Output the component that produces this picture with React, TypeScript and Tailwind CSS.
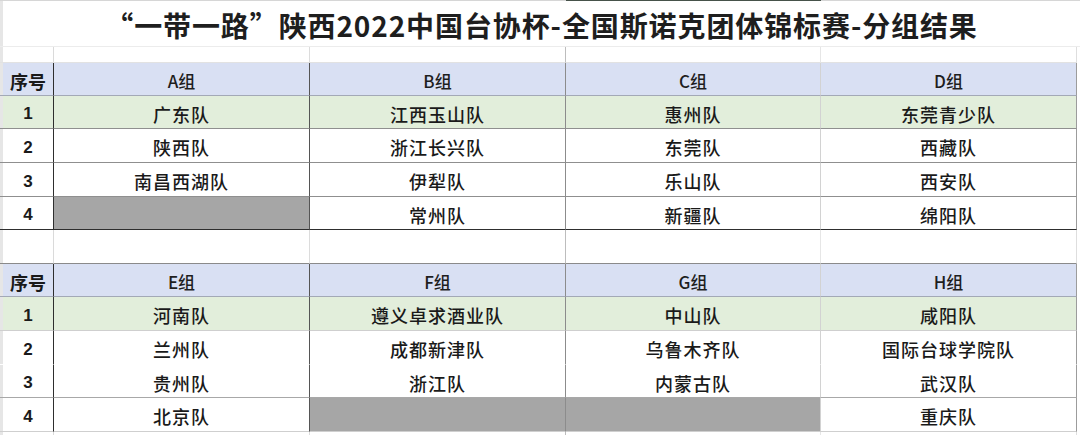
import React from "react";

const VT = [
  "border-r border-r-[#2e2e2e]",
  "border-r border-r-[#555555]",
  "border-r border-r-[#8c8c8c]",
  "border-r border-r-[#d2d2d2]",
  "border-r border-r-[#9c9c9c]",
];
const VB = [
  "border-r border-r-[#dadada]",
  "border-r border-r-[#dcdcdc]",
  "border-r border-r-[#bdbdbd]",
  "border-r border-r-[#e6e6e6]",
  "border-r border-r-[#dedede]",
];

const GRID = "grid grid-cols-[3px_51px_256px_256px_255px_256px_3px]";

type Cell = string | null;

function DataRow({
  h,
  bb,
  bg,
  first,
  cells,
  header,
}: {
  h: string;
  bb: string;
  bg: string;
  first: string;
  cells: Cell[];
  header?: boolean;
}) {
  return (
    <div className={`${GRID} ${h}`}>
      <div className={`bg-[#e6e6e6] ${bb}`} />
      <div
        className={`${VT[0]} ${bb} ${bg} flex items-center justify-center pt-[4px] ${
          header
            ? "text-[18px] font-bold text-[#1a1a1a]"
            : "text-[17px] font-bold text-[#1a1a1a] font-['Liberation_Sans',sans-serif]"
        }`}
      >
        {first}
      </div>
      {cells.map((c, i) => (
        <div
          key={i}
          className={`${VT[i + 1]} ${bb} ${c === null ? "bg-[#a6a6a6]" : bg} flex items-center justify-center pt-[4px] ${
            header
              ? "text-[17px] font-medium text-[#1e1e1e]"
              : "text-[18px] tracking-[1px] font-medium text-[#1a1a1a]"
          }`}
        >
          {c}
        </div>
      ))}
      <div className="bg-white" />
    </div>
  );
}

function BlankRow({ h, bb }: { h: string; bb: string }) {
  return (
    <div className={`${GRID} ${h}`}>
      <div className={`bg-[#e6e6e6] ${bb}`} />
      {VB.map((v, i) => (
        <div key={i} className={`${v} ${bb} bg-white`} />
      ))}
      <div className="bg-white" />
    </div>
  );
}

function Table({
  heads,
  rows,
  lines,
}: {
  heads: string[];
  rows: Cell[][];
  lines: { hb: string; rb: string[]; hh: string; rh: string[] };
}) {
  return (
    <>
      <DataRow
        h={lines.hh}
        bb={lines.hb}
        bg="bg-[#d9e0f3]"
        first="序号"
        cells={heads}
        header
      />
      {rows.map((r, i) => (
        <DataRow
          key={i}
          h={lines.rh[i]}
          bb={lines.rb[i]}
          bg={i === 0 ? "bg-[#e2eedb]" : "bg-white"}
          first={String(i + 1)}
          cells={r}
        />
      ))}
    </>
  );
}

export default function App() {
  return (
    <div className="w-[1080px] h-[435px] bg-white overflow-hidden flex flex-col font-['Noto_Sans_CJK_SC','Noto_Sans',sans-serif]">
      <div className={`${GRID} h-[1px]`}>
        <div className="bg-[#d6d6d6]" />
        <div className="bg-[#d6d6d6]" />
        <div className="bg-[#d6d6d6]" />
        <div className="bg-[#d6d6d6]" />
        <div className="bg-[#46524a]" />
        <div className="bg-[#d6d6d6]" />
        <div className="bg-[#d6d6d6]" />
      </div>
      <div className="flex h-[46px] border-b border-b-[#ececec]">
        <div className="w-[3px] bg-[#e6e6e6]" />
        <div className="flex-1 flex items-center justify-center pt-[2px] text-[28px] font-bold text-[#1e1e1e] tracking-[0.9px]">
          “一带一路”陕西2022中国台协杯-全国斯诺克团体锦标赛-分组结果
        </div>
      </div>
      <BlankRow h="h-[16px]" bb="border-b border-b-[#e2e2e2]" />
      <Table
        heads={["A组", "B组", "C组", "D组"]}
        rows={[
          ["广东队", "江西玉山队", "惠州队", "东莞青少队"],
          ["陕西队", "浙江长兴队", "东莞队", "西藏队"],
          ["南昌西湖队", "伊犁队", "乐山队", "西安队"],
          [null, "常州队", "新疆队", "绵阳队"],
        ]}
        lines={{
          hh: "h-[33px]",
          hb: "border-b border-b-[#a3a9b6]",
          rh: ["h-[33px]", "h-[34px]", "h-[34px]", "h-[33px]"],
          rb: [
            "border-b border-b-[#8f8f8f]",
            "border-b border-b-[#8f8f8f]",
            "border-b border-b-[#8f8f8f]",
            "border-b border-b-[#2e2e2e]",
          ],
        }}
      />
      <BlankRow h="h-[34px]" bb="border-b border-b-[#8a8a8a]" />
      <Table
        heads={["E组", "F组", "G组", "H组"]}
        rows={[
          ["河南队", "遵义卓求酒业队", "中山队", "咸阳队"],
          ["兰州队", "成都新津队", "乌鲁木齐队", "国际台球学院队"],
          ["贵州队", "浙江队", "内蒙古队", "武汉队"],
          ["北京队", null, null, "重庆队"],
        ]}
        lines={{
          hh: "h-[33px]",
          hb: "border-b border-b-[#a3a9b6]",
          rh: ["h-[34px]", "h-[34px]", "h-[33px]", "h-[34px]"],
          rb: [
            "border-b border-b-[#cfcfcf]",
            "border-b border-b-white",
            "border-b border-b-[#a8a8a8]",
            "border-b border-b-[#cfcfcf]",
          ],
        }}
      />
      <BlankRow h="h-[3px]" bb="" />
    </div>
  );
}
